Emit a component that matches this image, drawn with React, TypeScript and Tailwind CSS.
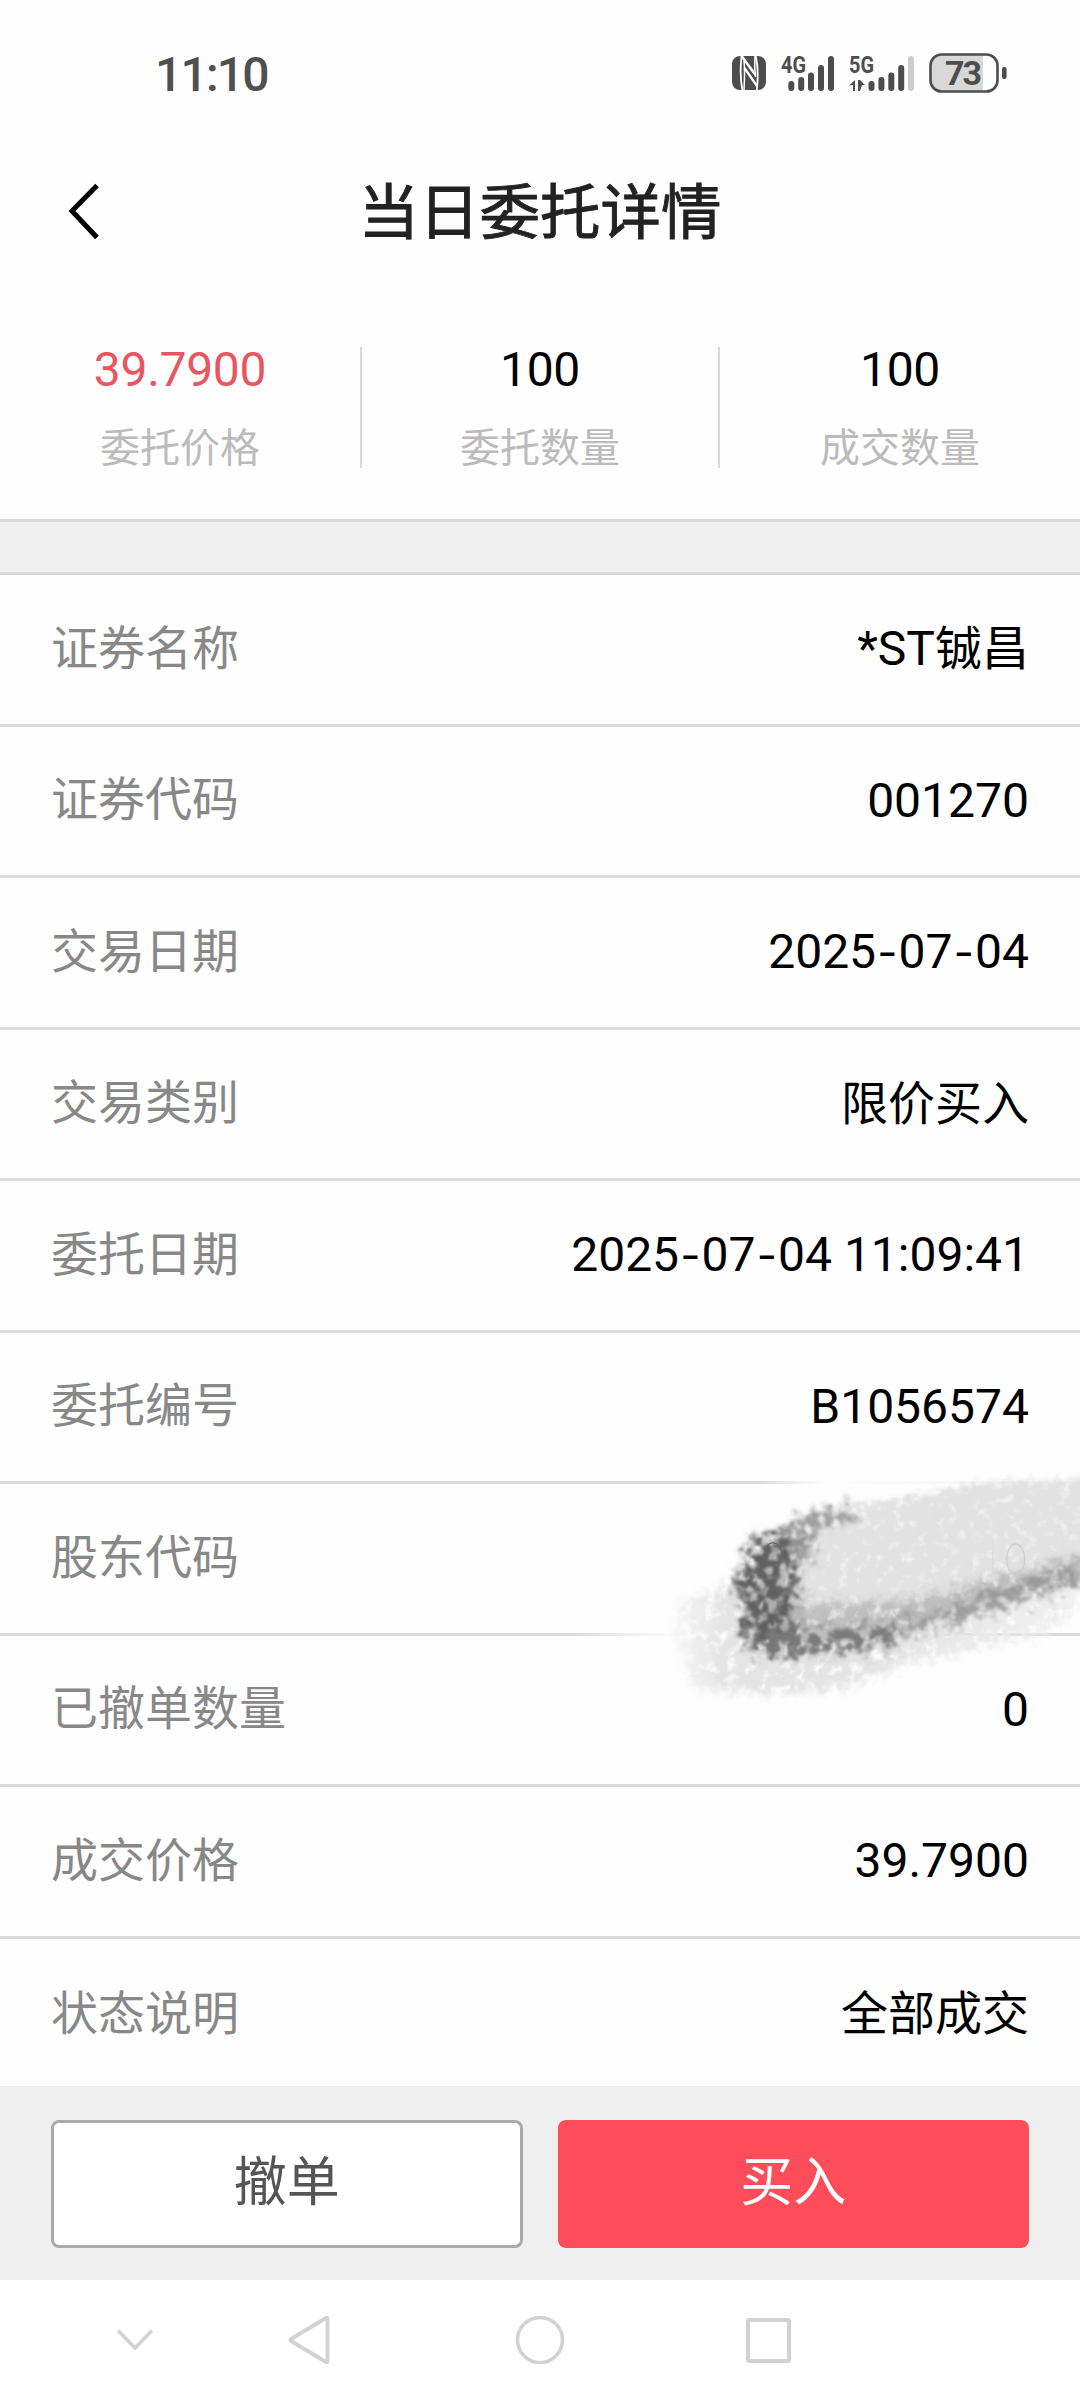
const summary = [
  { value: "39.7900", label: "委托价格", className: "text-[#e85661]" },
  { value: "100", label: "委托数量", className: "text-black" },
  { value: "100", label: "成交数量", className: "text-black" },
]

const details = [
  { label: "证券名称", value: "*ST铖昌" },
  { label: "证券代码", value: "001270" },
  { label: "交易日期", value: "2025-07-04" },
  { label: "交易类别", value: "限价买入" },
  { label: "委托日期", value: "2025-07-04 11:09:41" },
  { label: "委托编号", value: "B1056574" },
  { label: "股东代码", value: "", hidden: true },
  { label: "已撤单数量", value: "0" },
  { label: "成交价格", value: "39.7900" },
  { label: "状态说明", value: "全部成交" },
]

function NfcIcon() {
  return (
    <svg className="h-[34px] w-[34px]" viewBox="0 0 34 34" fill="none">
      <rect width="34" height="34" rx="8" fill="#4d4d4d" />
      <path d="M9.6 0 C8.400 10 8.400 24 10.400 34" stroke="white" strokeWidth="1.800" />
      <path d="M9.500 0 L23.500 19" stroke="white" strokeWidth="2.600" />
      <path d="M12.500 8 L24 24" stroke="#4d4d4d" strokeWidth="1.500" />
      <path d="M12.500 12 L25 30" stroke="white" strokeWidth="2.200" />
      <path d="M12 5 C13 15 12.500 25 12 34 M23 0 C22.500 9 22.500 14 23.500 21" stroke="white" strokeWidth="1.500" />
      <path d="M23.800 0 C26 10 26 24 24.800 34" stroke="white" strokeWidth="1.800" />
    </svg>
  )
}

function SignalText({ children }: { children: string }) {
  return (
    <text x="0" y="20" fontSize="24" fontWeight="700" fontFamily="Roboto, sans-serif" fill="#4d4d4d" textLength="25" lengthAdjust="spacingAndGlyphs">
      {children}
    </text>
  )
}

function Signal4G() {
  return (
    <svg className="h-[40px] w-[53px] overflow-visible" viewBox="0 0 53 40" fill="none">
      <SignalText>4G</SignalText>
      <g stroke="#4d4d4d" strokeWidth="6" strokeLinecap="round">
        <path d="M10.300 31 V35" />
        <path d="M20.200 27 V35" />
        <path d="M30 22.500 V35" />
        <path d="M40 15 V35" />
        <path d="M50 6 V35" />
      </g>
    </svg>
  )
}

function Signal5G() {
  return (
    <svg className="h-[40px] w-[66px] overflow-visible" viewBox="0 0 66 40" fill="none">
      <SignalText>5G</SignalText>
      <path d="M6 27 V38 H4 V32 L0 32.500 Z M9 27 H11 V38 H9 Z M11 38 V27 L16 32 H13 Z" fill="#4d4d4d" />
      <g stroke="#4d4d4d" strokeWidth="6" strokeLinecap="round">
        <path d="M22.500 31 V35" />
        <path d="M32.400 27 V35" />
        <path d="M42.300 22.500 V35" />
        <path d="M52.200 15 V35" />
        <path d="M62 6 V35" stroke="#cccccc" />
      </g>
    </svg>
  )
}

function BatteryIcon() {
  return (
    <svg className="h-10 w-[78px]" viewBox="0 0 78 40" fill="none">
      <path d="M13 2 H54 V38 H13 C6 38 2 34 2 28 V12 C2 6 6 2 13 2 Z" fill="#d8d8d8" />
      <rect x="1.500" y="1.500" width="67" height="37" rx="11" stroke="#4d4d4d" strokeWidth="2.600" />
      <rect x="73" y="14" width="4.600" height="12" rx="2" fill="#4d4d4d" />
      <text x="34.500" y="32" textAnchor="middle" fontSize="34" fontWeight="700" fontFamily="Roboto, sans-serif" fill="#4d4d4d" textLength="37">
        73
      </text>
    </svg>
  )
}

function StatusBar() {
  return (
    <header className="flex h-[146px] items-center justify-between pr-[73px] pl-[155px] text-[#505050]">
      <span className="pt-[3px] text-[48px] leading-none font-medium tracking-[-1.800px]">11:10</span>
      <div className="flex items-center">
        <NfcIcon />
        <div className="ml-[15px] flex gap-[15px]">
          <Signal4G />
          <Signal5G />
        </div>
        <div className="ml-[14px]">
          <BatteryIcon />
        </div>
      </div>
    </header>
  )
}

// Brush strokes drawn over the account number
function Smudge() {
  return (
    <svg className="absolute -top-[43px] right-0 z-10 h-[300px] w-[520px]" viewBox="0 0 1560 900" fill="none">
      <defs>
        <filter id="soft" x="-10%" y="-10%" width="120%" height="120%">
          <feGaussianBlur in="SourceGraphic" stdDeviation="9" result="b" />
          <feTurbulence type="fractalNoise" baseFrequency="0.03" numOctaves="3" seed="4" result="n" />
          <feDisplacementMap in="b" in2="n" scale="40" result="d" />
          <feColorMatrix in="n" type="matrix" values="0 0 0 0 0  0 0 0 0 0  0 0 0 0 0  0 2 0 0 0.1" result="m" />
          <feComposite in="d" in2="m" operator="in" />
        </filter>
        <filter id="wash" x="-10%" y="-20%" width="120%" height="140%">
          <feGaussianBlur in="SourceGraphic" stdDeviation="14" result="b" />
          <feTurbulence type="fractalNoise" baseFrequency="0.03" numOctaves="3" seed="9" result="n" />
          <feDisplacementMap in="b" in2="n" scale="50" result="d" />
          <feColorMatrix in="n" type="matrix" values="0 0 0 0 0  0 0 0 0 0  0 0 0 0 0  0 3 0 0 -0.5" result="m" />
          <feComposite in="d" in2="m" operator="in" />
        </filter>
        <filter id="grain" x="-30%" y="-30%" width="160%" height="160%">
          <feGaussianBlur in="SourceGraphic" stdDeviation="15" result="b" />
          <feTurbulence type="fractalNoise" baseFrequency="0.032" numOctaves="3" seed="12" result="n" />
          <feDisplacementMap in="b" in2="n" scale="90" xChannelSelector="R" yChannelSelector="B" result="d" />
          <feColorMatrix in="n" type="matrix" values="0 0 0 0 0  0 0 0 0 0  0 0 0 0 0  0 5 0 0 -1.7" result="m" />
          <feComposite in="d" in2="m" operator="in" result="c" />
          <feGaussianBlur in="c" stdDeviation="2.500" />
        </filter>
        <linearGradient id="fadeTop">
          <stop offset="0" stopColor="#fefefe" stopOpacity="0" />
          <stop offset="0.300" stopColor="#fefefe" />
          <stop offset="1" stopColor="#fefefe" stopOpacity="0.800" />
        </linearGradient>
        <linearGradient id="fadeBottom">
          <stop offset="0" stopColor="#fefefe" stopOpacity="0" />
          <stop offset="0.300" stopColor="#fefefe" />
          <stop offset="1" stopColor="#fefefe" />
        </linearGradient>
        <linearGradient id="light">
          <stop offset="0" stopColor="#e6e6e6" stopOpacity="0.300" />
          <stop offset="0.120" stopColor="#e4e4e4" />
          <stop offset="0.500" stopColor="#e4e4e4" />
          <stop offset="1" stopColor="#f0f0f0" />
        </linearGradient>
      </defs>
      <rect x="600" y="115" width="640" height="26" fill="url(#fadeTop)" />
      <rect x="1240" y="115" width="320" height="26" fill="#fefefe" fillOpacity="0.800" />
      <rect x="30" y="570" width="1090" height="28" fill="url(#fadeBottom)" />
      <path
        d="M340 480 L560 430 L700 560 L1560 450 L1560 510 L1420 590 L1100 655 L960 700 L830 745 L640 760 L400 745 L350 600 Z"
        fill="url(#light)"
        filter="url(#wash)"
      />
      <path
        d="M640 290 L710 238 L860 198 L1140 148 L1260 125 L1600 108 L1600 430 L1400 470 L1160 540 L1000 595 L850 615 L650 625 L570 590 L600 420 Z"
        fill="#e2e2e2"
        filter="url(#soft)"
      />
      <path
        d="M690 490 L900 480 L1060 475 L1200 440 L1320 400 L1600 340 L1600 410 L1400 460 L1240 505 L1000 590 L820 610 L640 610 Z"
        fill="#b9b9b9"
        fillOpacity="0.850"
        filter="url(#wash)"
      />
      <path
        d="M590 290 L690 280 L710 360 L670 440 L710 480 L670 530 L700 580 L760 600 L640 640 L560 600 L560 500 L530 420 Z"
        fill="#777777"
        fillOpacity="0.450"
        filter="url(#wash)"
      />
      <path
        d="M590 280 L700 270 L720 360 L700 440 L730 480 L680 540 L720 580 L780 600 L640 650 L560 620 L550 500 L520 420 Z"
        fill="#606060"
        filter="url(#grain)"
      />
      <path d="M570 590 L700 565 L840 565 L1010 545 L1030 600 L900 635 L650 645 Z" fill="#7a7a7a" filter="url(#grain)" />
      <path d="M680 255 L740 215 L870 195 L870 245 L760 270 L760 370 L690 340 Z" fill="#888888" fillOpacity="0.800" filter="url(#grain)" />
      <path d="M1020 535 L1160 505 L1240 460 L1370 430 L1560 350 L1560 430 L1330 505 L1050 590 Z" fill="#888888" fillOpacity="0.700" filter="url(#grain)" />
      <path d="M613 355 C608 290 666 290 667 350" stroke="#666666" strokeWidth="4" />
      <ellipse cx="1367" cy="355" rx="27" ry="46" stroke="#cfcfcf" strokeWidth="4" />
      <path d="M1298 300 V400" stroke="#dadada" strokeWidth="3" />
    </svg>
  )
}

// Date separators use a wider dash than the digits' own face has
function Value({ text }: { text: string }) {
  return (
    <span className="pt-[3px] text-[48px] leading-none text-black">
      {text.split(/([-\u4e00-\u9fff]+)/).map((part, i) => {
        if (part === "-") return <span key={i} className="inline-block w-[22.500px] text-center font-['Inter'] text-[44px]">-</span>
        if (/[\u4e00-\u9fff]/.test(part)) return <span key={i} className="text-[47px]">{part}</span>
        return part
      })}
    </span>
  )
}

function NavBar() {
  return (
    <nav className="flex h-[120px] items-center bg-white">
      <svg className="ml-[115px] h-[50px] w-10" viewBox="0 0 40 50" fill="none" stroke="#d2d2d2" strokeWidth="3.500">
        <path d="M3 15.500 L20 33 L37 15.500" />
      </svg>
      <svg className="ml-[131px] h-[50px] w-[46px]" viewBox="0 0 46 50" fill="none" stroke="#d2d2d2" strokeWidth="3.800" strokeLinejoin="round">
        <path d="M41.500 4 Q41.500 2 40 3 L5 24 Q3.500 25 5 26 L40 47 Q41.500 48 41.500 46 Z" />
      </svg>
      <svg className="ml-[183px] h-[50px] w-[50px]" viewBox="0 0 50 50" fill="none" stroke="#d2d2d2" strokeWidth="3.600">
        <circle cx="25" cy="25" r="22.500" />
      </svg>
      <svg className="ml-[179px] h-[50px] w-[50px]" viewBox="0 0 50 50" fill="none" stroke="#d2d2d2" strokeWidth="4">
        <rect x="4" y="5" width="41" height="41" rx="1.500" />
      </svg>
    </nav>
  )
}

export default function App() {
  return (
    <div className="flex h-[2400px] w-[1080px] flex-col overflow-hidden bg-[#fefefe] font-['Roboto','Noto_Sans_CJK_SC',sans-serif]">
      <StatusBar />
      <div className="relative flex h-[130px] items-center justify-center">
        <button className="absolute top-[36px] left-[64px]">
          <svg className="h-[60px] w-10" viewBox="0 0 40 60" fill="none" stroke="black" strokeWidth="5">
            <path d="M33 3.500 L8 29 L33 55.500" />
          </svg>
        </button>
        <h1 className="pt-1.5 text-[60.500px] leading-none text-[#222222] [-webkit-text-stroke:0.9px_#222222]">当日委托详情</h1>
      </div>

      <section className="grid h-[243px] grid-cols-3 pt-[71px]">
        {summary.map((item) => (
          <div
            key={item.label}
            className="flex h-[121px] flex-col items-center border-[#d9d9d9] pt-px nth-2:border-x-2"
          >
            <span className={`text-[48px] leading-[44px] tracking-[-0.300px] ${item.className}`}>{item.value}</span>
            <span className="mt-[35px] text-[40px] leading-[44px] text-[#bbbbbb]">{item.label}</span>
          </div>
        ))}
      </section>
      <div className="h-14 shrink-0 border-y-3 border-[#d9d9d9] bg-[#efefef]" />

      <ul className="h-[1511px] overflow-hidden">
        {details.map((row) => (
          <li
            key={row.label}
            className="relative flex h-[151.500px] items-center justify-between border-b-3 border-[#dbdbdb] pr-[51px] pb-[3px] pl-[51px] last:border-b-0"
          >
            <span className="pt-px text-[47px] leading-none text-[#888888]">{row.label}</span>
            <Value text={row.value} />
            {row.hidden && <Smudge />}
          </li>
        ))}
      </ul>

      <div className="grid h-[194px] shrink-0 grid-cols-2 gap-[35px] bg-[#efefef] px-[51px] pt-[34px]">
        <button className="h-32 rounded-lg border-3 border-[#aaaaaa] bg-white pb-0.5 text-[53px] leading-none text-[#555555]">
          撤单
        </button>
        <button className="h-32 rounded-lg bg-[#fd4d5b] pb-0.5 text-[53px] leading-none text-white">买入</button>
      </div>
      <NavBar />
    </div>
  )
}
